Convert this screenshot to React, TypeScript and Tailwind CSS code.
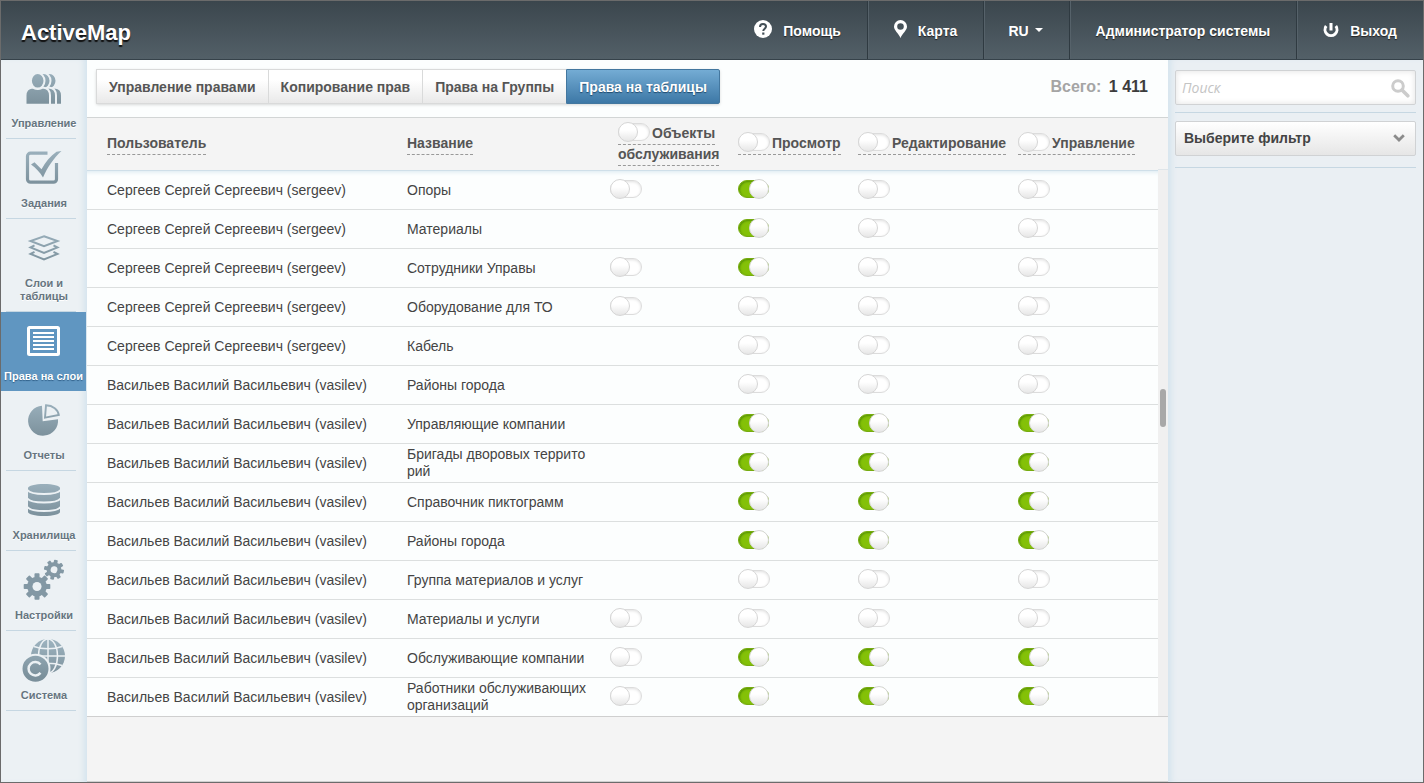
import {useState} from 'react';
import type {ReactNode} from 'react';

type RowData = {
  user: string;
  name: string;
  // objects, view, edit, manage. null = right is not available
  rights: (boolean | null)[];
};

const sergeev = 'Сергеев Сергей Сергеевич (sergeev)';
const vasilev = 'Васильев Василий Васильевич (vasilev)';

const initialRows: RowData[] = [
  {user: sergeev, name: 'Опоры', rights: [false, true, false, false]},
  {user: sergeev, name: 'Материалы', rights: [null, true, false, false]},
  {user: sergeev, name: 'Сотрудники Управы', rights: [false, true, false, false]},
  {user: sergeev, name: 'Оборудование для ТО', rights: [false, false, false, false]},
  {user: sergeev, name: 'Кабель', rights: [null, false, false, false]},
  {user: vasilev, name: 'Районы города', rights: [null, false, false, false]},
  {user: vasilev, name: 'Управляющие компании', rights: [null, true, true, true]},
  {user: vasilev, name: 'Бригады дворовых территорий', rights: [null, true, true, true]},
  {user: vasilev, name: 'Справочник пиктограмм', rights: [null, true, true, true]},
  {user: vasilev, name: 'Районы города', rights: [null, true, true, true]},
  {user: vasilev, name: 'Группа материалов и услуг', rights: [null, false, false, false]},
  {user: vasilev, name: 'Материалы и услуги', rights: [false, false, false, false]},
  {user: vasilev, name: 'Обслуживающие компании', rights: [false, true, true, true]},
  {user: vasilev, name: 'Работники обслуживающих организаций', rights: [false, true, true, true]},
];

const rightNames = ['Объекты обслуживания', 'Просмотр', 'Редактирование', 'Управление'];
const tabs = ['Управление правами', 'Копирование прав', 'Права на Группы', 'Права на таблицы'];

const STEEL = 'url(#steel)';
const PANEL = '#ecf1f4';

const UsersIcon = () => (
  <g fill={STEEL} stroke={PANEL} strokeWidth="2">
    {[12, 6, 0].map((dx) => (
      <g key={dx} transform={`translate(${dx} 0)`}>
        <path d="M3.500 38V28.500c0-4.500 2.500-7.500 7-8 3 2 7.500 2 10.500 0 4.500.5 7 3.500 7 8V38z" />
        <ellipse cx="15.700" cy="13.800" rx="6.800" ry="7.800" />
      </g>
    ))}
    <path d="M0 37.900h44" strokeWidth="2.400" />
  </g>
);

const TasksIcon = () => (
  <>
    <path
      d="M25.500 6.200H8.500a3 3 0 0 0-3 3v23a3 3 0 0 0 3 3h23a3 3 0 0 0 3-3V16"
      fill="none"
      stroke={STEEL}
      strokeWidth="3.200"
    />
    <path d="M9 17.500l3.500-2.200 7 7C23.500 15 28.500 9 34.500 4.800L39.500 4C31.500 11.500 25.500 20 21 30.500 18 25.500 14 21 9 17.500z" fill={STEEL} />
  </>
);

const LayersIcon = () => (
  <g fill="none" stroke={STEEL} strokeWidth="2">
    <path d="M22 9.200L35.500 14 22 19.200 8.500 14z" />
    <path d="M12.500 18.400L8.500 20.500 22 26l13.500-5.500-4-2.100" />
    <path d="M12.500 24.900L8.500 27 22 32.500 35.500 27l-4-2.100" />
  </g>
);

const RightsIcon = () => (
  <>
    <rect x="6.500" y="7.500" width="30" height="27" rx="1" fill="none" stroke="#fff" strokeWidth="3" />
    <path d="M11 13h21M11 17h21M11 21h21M11 25h21M11 29h21" stroke="#fff" strokeWidth="2" />
  </>
);

const ReportsIcon = () => (
  <>
    <path d="M20.700 22.200L20 6.700A15 15 0 1 0 36 20.200z" fill={STEEL} />
    <path d="M24 6.300L23 18.600l13.800-2.600C36 10.500 31 6.500 24 6.300z" fill="none" stroke={STEEL} strokeWidth="1.900" />
  </>
);

const StorageIcon = () => (
  <>
    <path d="M6 9c0-2.200 7-4 16-4s16 1.800 16 4v24c0 2.200-7 4-16 4s-16-1.800-16-4z" fill={STEEL} />
    <path
      d="M5.500 11c2 3 8 4 16.500 4s14.500-1 16.500-4M5.500 19.500c2 3 8 4 16.500 4s14.500-1 16.500-4M5.500 28c2 3 8 4 16.500 4s14.500-1 16.500-4"
      fill="none"
      stroke={PANEL}
      strokeWidth="1.800"
    />
  </>
);

const Gear = ({cx, cy, r, turn}: {cx: number; cy: number; r: number; turn: number}) => (
  <g transform={`translate(${cx} ${cy}) rotate(${turn})`}>
    {[0, 45, 90, 135].map((a) => (
      <rect key={a} x={-r * 0.19} y={-r} width={r * 0.38} height={r * 2} rx="0.800" transform={`rotate(${a})`} fill="#8398a4" />
    ))}
    <circle r={r * 0.74} fill="#8398a4" />
    <circle r={r * 0.34} fill={PANEL} />
  </g>
);

const SettingsIcon = () => (
  <>
    <Gear cx={15} cy={27.500} r={13.300} turn={0} />
    <Gear cx={32} cy={10.700} r={10} turn={12} />
  </>
);

const SystemIcon = () => (
  <>
    <circle cx="26" cy="17" r="17" fill={STEEL} />
    <g fill="none" stroke={PANEL} strokeWidth="1.500">
      <path d="M26 0v34M9 17h34M12 7.500c8 3 20 3 28 0M12 26.500c8-3 20-3 28 0" />
      <ellipse cx="26" cy="17" rx="9.500" ry="17" />
    </g>
    <circle cx="13.500" cy="29.700" r="14" fill={STEEL} stroke={PANEL} strokeWidth="2" />
    <path d="M18.500 25.500a6.700 6.700 0 1 0 0 8.400" fill="none" stroke={PANEL} strokeWidth="2.500" />
  </>
);

const navItems: {label: string; icon: ReactNode; active?: boolean}[] = [
  {label: 'Управление', icon: <UsersIcon />},
  {label: 'Задания', icon: <TasksIcon />},
  {label: 'Слои и таблицы', icon: <LayersIcon />},
  {label: 'Права на слои', icon: <RightsIcon />, active: true},
  {label: 'Отчеты', icon: <ReportsIcon />},
  {label: 'Хранилища', icon: <StorageIcon />},
  {label: 'Настройки', icon: <SettingsIcon />},
  {label: 'Система', icon: <SystemIcon />},
];

type ToggleProps = {
  label: string;
  checked: boolean;
  onChange: () => void;
  className: string;
};

const Toggle = ({label, checked, onChange, className}: ToggleProps) => (
  <input
    type="checkbox"
    aria-label={label}
    checked={checked}
    onChange={onChange}
    className={`${className} relative h-[18px] w-8 cursor-pointer appearance-none rounded-full border border-[#dcdcdc] bg-white shadow-[inset_0_1px_3px_rgba(0,0,0,0.12)] before:absolute before:-top-[2px] before:-left-px before:size-5 before:rounded-full before:border before:border-[#d6d6d6] before:bg-linear-to-b before:from-white before:from-40% before:to-[#e6e6e6] checked:w-[31px] checked:border-[#76ab10] checked:bg-[#84c108] checked:shadow-[inset_1px_1px_2px_rgba(0,60,0,0.35)] checked:before:left-[10px]`}
  />
);

const Header = () => (
  <header className="relative z-10 flex h-[59px] items-stretch justify-between border-b border-[#36424a] bg-linear-to-b from-[#3b464d] to-[#536068] text-[14px] font-bold text-white">
    <a href="#" className="flex items-center pt-1 pl-5 text-[22px] [text-shadow:0_2px_1px_#111]">
      ActiveMap
    </a>
    <nav className="flex items-stretch [text-shadow:0_1px_1px_#222]">
      <a href="#help" className="flex items-center gap-[11px] px-[26px] pt-[2px]">
        <svg width="18" height="18" viewBox="0 0 18 18" className="-mt-1">
          <circle cx="9" cy="9" r="9" fill="#fff" />
          <path d="M6 7c0-2 1.300-3 3-3s3 1 3 2.600c0 2-2.700 2.200-2.700 4.300" fill="none" stroke="#434f57" strokeWidth="2" />
          <rect x="8.200" y="12.500" width="2.200" height="2.200" fill="#434f57" />
        </svg>
        Помощь
      </a>
      <a href="#map" className="flex items-center gap-[11px] border-l border-[#2f3a41] px-[26px] pt-[2px] shadow-[inset_1px_0_#56626a]">
        <svg width="13" height="18" viewBox="0 0 13 18" className="-mt-1">
          <path d="M6.500 0A6.500 6.500 0 0 0 0 6.500C0 10.500 4.500 13 6.500 18 8.500 13 13 10.500 13 6.500A6.500 6.500 0 0 0 6.500 0zm0 3.200a3.300 3.300 0 1 1 0 6.600 3.300 3.300 0 0 1 0-6.600z" fill="#fff" fillRule="evenodd" />
        </svg>
        Карта
      </a>
      <button type="button" className="flex cursor-pointer items-center gap-[6px] border-l border-[#2f3a41] pt-[2px] pr-[26px] pl-6 font-bold shadow-[inset_1px_0_#56626a]">
        RU
        <svg width="8" height="4" viewBox="0 0 8 4" className="-mt-[2px]">
          <path d="M0 0h8L4 4z" fill="#fff" />
        </svg>
      </button>
      <a href="#profile" className="flex items-center border-l border-[#2f3a41] px-[26px] pt-[2px] shadow-[inset_1px_0_#56626a]">
        Администратор системы
      </a>
      <a href="#logout" className="flex items-center gap-[11px] border-l border-[#2f3a41] px-[26px] pt-[2px] shadow-[inset_1px_0_#56626a]">
        <svg width="16" height="16" viewBox="0 0 16 16" className="-mt-[2px]">
          <path d="M3.200 4a6 6 0 1 0 9.600 0M8 1v7.500" fill="none" stroke="#fff" strokeWidth="3" />
        </svg>
        Выход
      </a>
    </nav>
  </header>
);

const Sidebar = () => (
  <aside className="w-[86px] shrink-0 bg-[#ecf1f4] shadow-[inset_-6px_0_6px_-3px_#d3e3ed]">
    <svg className="absolute size-0" aria-hidden="true">
      <defs>
        <linearGradient id="steel" gradientUnits="userSpaceOnUse" x1="0" y1="4" x2="0" y2="38">
          <stop offset="0" stopColor="#9ab0bc" />
          <stop offset="1" stopColor="#7b909b" />
        </linearGradient>
      </defs>
    </svg>
    <ul className="-mt-px text-center text-[11px] leading-[13px] font-bold">
      {navItems.map((item) => (
        <li key={item.label}>
          {item.active ? (
            <a href="#" aria-current="page" className="mr-px flex flex-col items-center bg-[#6096c1] py-2 whitespace-nowrap text-white [text-shadow:0_1px_1px_#2f5f88]">
              <svg width="44" height="44" viewBox="0 0 44 44" className="mb-[6px]">{item.icon}</svg>
              {item.label}
            </a>
          ) : (
            <a href="#" className="mr-[11px] ml-[5px] flex flex-col items-center border-b border-[#c6d7e2] py-2 text-[#66757f] [text-shadow:0_1px_0_#fff]">
              <svg width="44" height="44" viewBox="0 0 44 44" className="mb-[6px] translate-x-[3px]">{item.icon}</svg>
              <span className="translate-x-[3px]">{item.label}</span>
            </a>
          )}
        </li>
      ))}
    </ul>
  </aside>
);

const FilterPanel = () => (
  <aside className="w-[255px] shrink-0 bg-[#eaeff3] px-[7px] pt-[10px] shadow-[inset_6px_0_6px_-3px_#d3e3ed]">
    <label className="relative block border-b border-[#c6d7e2] pb-[7px]">
      <input
        type="search"
        placeholder="Поиск"
        aria-label="Поиск"
        className="block h-[35px] w-full rounded-xs border border-[#d0d2d4] bg-white px-[6px] font-['Open_Sans',sans-serif] text-[14px] shadow-[inset_0_0_6px_rgba(0,0,0,0.12)] outline-none placeholder:text-[#c4c4c4] placeholder:italic"
      />
      <svg width="19" height="19" viewBox="0 0 19 19" className="absolute top-[9px] right-[6px]">
        <circle cx="7" cy="7" r="5.300" fill="none" stroke="#ccc" strokeWidth="3" />
        <path d="M11 11l5.800 5.800" stroke="#ccc" strokeWidth="3.600" strokeLinecap="round" />
      </svg>
    </label>
    <label className="relative mt-2 block border-b border-[#c6d7e2] pb-[11px]">
      <select
        aria-label="Фильтр"
        className="block h-[35px] w-full appearance-none rounded-xs border border-[#d0d2d4] bg-linear-to-b from-white to-[#e6e6e6] px-2 text-[14px] font-bold text-[#444] outline-none"
      >
        <option>Выберите фильтр</option>
      </select>
      <svg width="12" height="8" viewBox="0 0 12 8" className="absolute top-[13px] right-[11px]">
        <path d="M1.200 1.200L6 6l4.800-4.800" fill="none" stroke="#8b8b8b" strokeWidth="2.800" />
      </svg>
    </label>
  </aside>
);

const App = () => {
  const [rows, setRows] = useState(initialRows);
  const [all, setAll] = useState([false, false, false, false]);
  const [activeTab, setActiveTab] = useState(3);

  const toggleRight = (rowIndex: number, rightIndex: number) => {
    setRows(
      rows.map((row, i) =>
        i === rowIndex
          ? {...row, rights: row.rights.map((r, j) => (j === rightIndex ? !r : r))}
          : row,
      ),
    );
  };

  const toggleAll = (rightIndex: number) => {
    const value = !all[rightIndex];
    setAll(all.map((a, i) => (i === rightIndex ? value : a)));
    setRows(
      rows.map((row) => ({
        ...row,
        rights: row.rights.map((r, j) => (j === rightIndex && r !== null ? value : r)),
      })),
    );
  };

  return (
    <div className="flex min-h-screen flex-col border border-[#6b6b6b] bg-[#f4f4f4] font-['Liberation_Sans',Arial,sans-serif] text-[#444]">
      <Header />
      <div className="flex flex-1 items-stretch">
        <Sidebar />
        <main className="min-w-0 flex-1 border-b border-[#d0d0d0]">
          <div className="flex items-start justify-between border-b border-[#d2d5d5] bg-[#fcfefe] pt-[9px] pr-5 pb-[13px] pl-[9px]">
            <div className="flex rounded-xs shadow-[0_1px_3px_rgba(0,0,0,0.15)]">
              {tabs.map((tab, i) => (
                <button
                  key={tab}
                  type="button"
                  onClick={() => setActiveTab(i)}
                  className={
                    i === activeTab
                      ? 'h-[35px] cursor-pointer rounded-r-xs border border-[#43779f] bg-linear-to-b from-[#74acd4] to-[#3d78a6] px-3 pt-px text-[14px] font-bold text-white [text-shadow:0_1px_1px_#1f4a6e]'
                      : 'h-[35px] cursor-pointer border border-r-0 border-[#d9dada] bg-linear-to-b from-white from-30% to-[#e9e9e9] px-3 pt-px text-[14px] font-bold text-[#555]'
                  }
                >
                  {tab}
                </button>
              ))}
            </div>
            <p className="pt-[6px] text-[16px] font-bold text-[#a5a5a5]">
              Всего: <span className="pl-[3px] text-[#3c3c3c]">1 411</span>
            </p>
          </div>
          <div className="flex border-b border-[#cfcfcf]">
            <div className="min-w-0 flex-1">
              <table className="w-full table-fixed border-collapse text-[14px]">
                <colgroup>
                  <col className="w-[300px]" />
                  <col />
                  <col className="w-[120px]" />
                  <col className="w-[120px]" />
                  <col className="w-[160px]" />
                  <col className="w-[160px]" />
                </colgroup>
                <thead>
                  <tr className="h-[52px] border-b border-[#cfdfe9] text-left leading-[21px] text-[#555]">
                    {['Пользователь', 'Название'].map((title) => (
                      <th key={title} scope="col" className="p-0 pl-5">
                        <span className="border-b border-dashed border-[#999] pb-[3px]">{title}</span>
                      </th>
                    ))}
                    {rightNames.map((title, i) => (
                      <th key={title} scope="col" className={i === 0 ? 'p-0 pl-5' : 'p-0 pl-5 whitespace-nowrap'}>
                        <span className="border-b border-dashed border-[#999] pb-[3px]">
                          <Toggle
                            label={title}
                            checked={all[i]}
                            onChange={() => toggleAll(i)}
                            className="inline-block align-text-bottom"
                          />
                          <span className="ml-[2px]">{title}</span>
                        </span>
                      </th>
                    ))}
                  </tr>
                </thead>
                <tbody className="bg-[#fcfefe]">
                  {rows.map((row, i) => (
                    <tr key={i} className="h-[39px] border-b border-[#dcdfdf] leading-[17px] first:shadow-[inset_0_5px_4px_-3px_#d8e8f0] last:border-b-0">
                      <td className="p-0 pt-px pl-5">{row.user}</td>
                      <td className="p-0 pt-px pr-2 pl-5 break-all">{row.name}</td>
                      {row.rights.map((right, j) => (
                        <td key={j} className={j === 0 ? 'p-0 pb-[2px] pl-3' : 'p-0 pb-[2px] pl-5'}>
                          {right !== null && (
                            <Toggle
                              label={`${rightNames[j]}: ${row.name}`}
                              checked={right}
                              onChange={() => toggleRight(i, j)}
                              className="block"
                            />
                          )}
                        </td>
                      ))}
                    </tr>
                  ))}
                </tbody>
              </table>
            </div>
            <div className="flex w-[10px] flex-col" aria-hidden="true">
              <div className="h-[52px] border-b border-[#dfe5e9]" />
              <div className="flex-1 bg-[#f0f0f0] px-[2px] pt-[219px]">
                <div className="h-[38px] rounded-full bg-[#a8a8a8]" />
              </div>
            </div>
          </div>
        </main>
        <FilterPanel />
      </div>
    </div>
  );
};

export default App;
